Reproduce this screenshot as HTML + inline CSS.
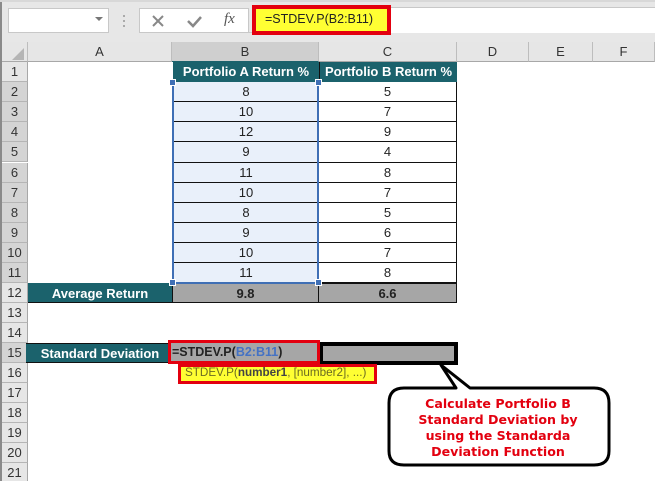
<!DOCTYPE html>
<html><head><meta charset="utf-8">
<style>
html,body{margin:0;padding:0;background:#fff}
#p{position:relative;width:655px;height:481px;overflow:hidden;background:#fff;font-family:"Liberation Sans",sans-serif;color:#222}
#p div{position:absolute;box-sizing:border-box}
.rh{left:2px;width:26px;height:20px;background:#e6e6e6;border-bottom:1px solid #b5b5b5;border-right:1px solid #a8a8a8;text-align:center;font-size:13px;line-height:20px;color:#333}
.ch{top:42px;height:20px;background:#e6e6e6;border-bottom:1px solid #a8a8a8;border-right:1px solid #bdbdbd;text-align:center;font-size:13px;line-height:20px;color:#333}
.b{left:173px;width:146px;height:20px;background:#e9f0fa;border-bottom:1px solid #111;text-align:center;font-size:13px;line-height:20px}
.c{left:319px;width:138px;height:20px;background:#fff;border-bottom:1px solid #111;border-right:1px solid #111;text-align:center;font-size:13px;line-height:20px}
.t{background:#1b626c;color:#fff;font-weight:bold;text-align:center;font-size:13px;line-height:20px;white-space:nowrap}
.g{background:#a6a6a6;font-weight:bold;text-align:center;font-size:13px;line-height:19px;border-bottom:1px solid #111;color:#222}
.h{width:7px;height:7px;background:#3f6fb5;border:1px solid #fff}
</style></head><body><div id="p">
<div style="left:0;top:0;width:655px;height:42px;background:#e7e7e7"></div>
<div style="left:0;top:0;width:2px;height:481px;background:#8a8a8a"></div>
<div style="left:0;top:0;width:655px;height:2px;background:#d8d8d8"></div>
<div style="left:8px;top:8px;width:101px;height:25px;background:#fff;border:1px solid #c8c8c8"></div>
<div style="left:95px;top:17px;width:0;height:0;border-left:4px solid transparent;border-right:4px solid transparent;border-top:4px solid #777"></div>
<div style="left:123px;top:15px;width:2px;height:2px;background:#aaa"></div>
<div style="left:123px;top:20px;width:2px;height:2px;background:#aaa"></div>
<div style="left:123px;top:25px;width:2px;height:2px;background:#aaa"></div>
<div style="left:139px;top:8px;width:110px;height:25px;background:#fff;border:1px solid #c8c8c8"></div>
<svg style="position:absolute;left:150px;top:14px" width="60" height="14"><path d="M3 2L13 12M13 2L3 12" stroke="#888" stroke-width="2" fill="none"/><path d="M38 7L43 12L51 3" stroke="#888" stroke-width="2.5" fill="none"/></svg>
<div style="left:224px;top:11px;font:italic 15px 'Liberation Serif',serif;color:#555">fx</div>
<div style="left:249px;top:32px;width:406px;height:1px;background:#c8c8c8"></div>
<div style="left:390px;top:7px;width:265px;height:26px;background:#fff;border-top:1px solid #c8c8c8"></div>
<div style="left:252px;top:5px;width:139px;height:30px;background:#ffff33;border:4px solid #e3000f;font-size:12.5px;line-height:21px;padding-left:9px;white-space:nowrap;color:#222">=STDEV.P(B2:B11)</div>

<div style="left:2px;top:42px;width:26px;height:20px;background:#e6e6e6;border-bottom:1px solid #a8a8a8;border-right:1px solid #bdbdbd"></div>
<div style="left:12px;top:48px;width:0;height:0;border-left:12px solid transparent;border-bottom:12px solid #b5b5b5"></div>
<div class="ch" style="left:28px;width:144px">A</div>
<div class="ch" style="left:172px;width:147px;background:#cfcfcf;border-bottom:1px solid #1b626c">B</div>
<div class="ch" style="left:319px;width:138px">C</div>
<div class="ch" style="left:457px;width:72px">D</div>
<div class="ch" style="left:529px;width:64px">E</div>
<div class="ch" style="left:593px;width:62px">F</div>

<div class="rh" style="top:62px">1</div>
<div class="rh" style="top:82px;background:#d4d4d4">2</div>
<div class="rh" style="top:102px;background:#d4d4d4">3</div>
<div class="rh" style="top:122px;background:#d4d4d4">4</div>
<div class="rh" style="top:142px;background:#d4d4d4">5</div>
<div class="rh" style="top:163px;background:#d4d4d4">6</div>
<div class="rh" style="top:183px;background:#d4d4d4">7</div>
<div class="rh" style="top:203px;background:#d4d4d4">8</div>
<div class="rh" style="top:223px;background:#d4d4d4">9</div>
<div class="rh" style="top:243px;background:#d4d4d4">10</div>
<div class="rh" style="top:263px;background:#d4d4d4">11</div>
<div class="rh" style="top:283px">12</div>
<div class="rh" style="top:303px">13</div>
<div class="rh" style="top:323px">14</div>
<div class="rh" style="top:343px;background:#d4d4d4">15</div>
<div class="rh" style="top:363px">16</div>
<div class="rh" style="top:383px">17</div>
<div class="rh" style="top:403px">18</div>
<div class="rh" style="top:423px">19</div>
<div class="rh" style="top:443px">20</div>
<div class="rh" style="top:463px">21</div>

<div class="t" style="left:173px;top:62px;width:146px;height:20px">Portfolio A Return %</div>
<div class="t" style="left:319px;top:62px;width:138px;height:20px;border-left:1px solid #111">Portfolio B Return %</div>

<div class="b" style="top:82px">8</div><div class="c" style="top:82px">5</div>
<div class="b" style="top:102px">10</div><div class="c" style="top:102px">7</div>
<div class="b" style="top:122px">12</div><div class="c" style="top:122px">9</div>
<div class="b" style="top:142px;height:21px">9</div><div class="c" style="top:142px;height:21px">4</div>
<div class="b" style="top:163px">11</div><div class="c" style="top:163px">8</div>
<div class="b" style="top:183px">10</div><div class="c" style="top:183px">7</div>
<div class="b" style="top:203px">8</div><div class="c" style="top:203px">5</div>
<div class="b" style="top:223px">9</div><div class="c" style="top:223px">6</div>
<div class="b" style="top:243px">10</div><div class="c" style="top:243px">7</div>
<div class="b" style="top:263px">11</div><div class="c" style="top:263px">8</div>

<div class="t" style="left:28px;top:283px;width:144px;height:20px;line-height:21px;border-bottom:1px solid #111">Average Return</div>
<div class="g" style="left:172px;top:283px;width:147px;height:20px;border-left:1px solid #111;border-right:1px solid #111;border-top:1px solid #111">9.8</div>
<div class="g" style="left:319px;top:283px;width:138px;height:20px;border-right:1px solid #111;border-top:1px solid #111">6.6</div>

<div style="left:172px;top:82px;width:147px;height:202px;border:2px solid #3f6fb5;border-top:none;background:none"></div>
<div class="h" style="left:169px;top:79px"></div>
<div class="h" style="left:315px;top:79px"></div>
<div class="h" style="left:169px;top:279px"></div>
<div class="h" style="left:315px;top:279px"></div>

<div class="t" style="left:26px;top:343px;width:146px;height:20px;padding-left:2px;border-bottom:1px solid #111;border-top:1px solid #111">Standard Deviation</div>
<div style="left:319px;top:342px;width:139px;height:23px;background:#a6a6a6;border:4px solid #000"></div>
<div style="left:168px;top:340px;width:152px;height:24px;background:#a6a6a6;border:3px solid #e3000f;font-size:12.5px;line-height:19px;font-weight:bold;padding-left:1px;white-space:nowrap;color:#222">=STDEV.P(<span style="color:#4472c4">B2:B11</span>)</div>
<div style="left:178px;top:364px;width:199px;height:20px;background:#ffff33;border:3px solid #e3000f;font-size:11.7px;line-height:12px;padding-left:4px;white-space:nowrap;color:#6b6b22">STDEV.P(<b style="color:#444">number1</b>, [number2], ...)</div>

<svg style="position:absolute;left:0;top:0" width="655" height="481">
<path d="M404 388H456L441 365L470 388H594Q609 388 609 403V451Q609 465 594 465H404Q389 465 389 451V403Q389 388 404 388Z" fill="#fff" stroke="#000" stroke-width="3" stroke-linejoin="round"/>
</svg>
<div style="left:388px;top:396px;width:220px;text-align:center;color:#e3000f;font:bold 12.6px/16px 'DejaVu Sans','Liberation Sans',sans-serif;white-space:nowrap">Calculate Portfolio B<br>Standard Deviation by<br>using the Standarda<br>Deviation Function</div>
</div></body></html>
